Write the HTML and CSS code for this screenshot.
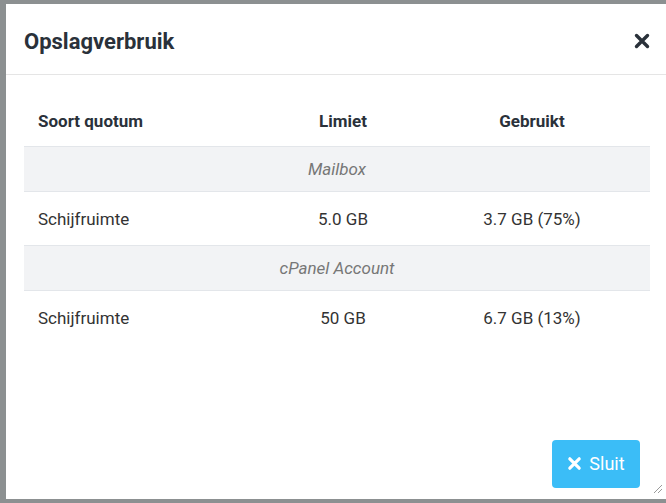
FILE: index.html
```html
<!DOCTYPE html>
<html lang="nl">
<head>
<meta charset="utf-8">
<title>Opslagverbruik</title>
<link rel="stylesheet" href="styles.css">
</head>
<body>
<div class="modal">
  <div class="modal-header">
    <h2 class="modal-title">Opslagverbruik</h2>
    <button class="close" aria-label="Sluiten">
      <svg width="16" height="16" viewBox="0 0 16 16"><path d="M2.5 2.5 L13.5 13.5 M13.5 2.5 L2.5 13.5" stroke="#2a313a" stroke-width="3.4" stroke-linecap="round"/></svg>
    </button>
  </div>
  <div class="modal-body">
    <table class="quota">
      <colgroup><col class="c1"><col class="c2"><col class="c3"></colgroup>
      <thead>
        <tr><th class="left">Soort quotum</th><th>Limiet</th><th>Gebruikt</th></tr>
      </thead>
      <tbody>
        <tr class="group"><td colspan="3">Mailbox</td></tr>
        <tr class="data"><td class="left">Schijfruimte</td><td>5.0 GB</td><td>3.7 GB (75%)</td></tr>
        <tr class="group"><td colspan="3">cPanel Account</td></tr>
        <tr class="data last"><td class="left">Schijfruimte</td><td>50 GB</td><td>6.7 GB (13%)</td></tr>
      </tbody>
    </table>
  </div>
  <div class="modal-footer">
    <button class="btn">
      <svg width="15" height="15" viewBox="0 0 16 16"><path d="M3 3 L13 13 M13 3 L3 13" stroke="#fff" stroke-width="3.4" stroke-linecap="round"/></svg>
      <span>Sluit</span>
    </button>
  </div>
  <div class="grip"></div>
</div>
</body>
</html>
```
FILE: styles.css
```css
html, body {
  margin: 0;
  padding: 0;
  height: 100%;
}
body {
  background: #8c9091;
  font-family: Roboto, "Liberation Sans", Arial, sans-serif;
  color: #333;
  overflow: hidden;
}
.modal {
  position: absolute;
  left: 6px;
  top: 4px;
  width: 660px;
  height: 495px;
  background: #fff;
  display: flex;
  flex-direction: column;
  box-sizing: border-box;
}
.modal-header {
  height: 71px;
  box-sizing: border-box;
  border-bottom: 1px solid #e5e5e5;
  display: flex;
  align-items: center;
  justify-content: space-between;
  padding: 4px 16px 0 18px;
}
.modal-title {
  margin: 0;
  font-size: 22px;
  font-weight: 700;
  color: #2a313a;
}
.close {
  border: 0;
  background: none;
  padding: 0;
  width: 16px;
  height: 16px;
  display: flex;
}
.modal-body {
  flex: 1;
  padding: 20px 16px 0 18px;
}
.quota {
  width: 626px;
  border-collapse: collapse;
  font-size: 17px;
}
.c1 { width: 248px; }
.c2 { width: 142px; }
.c3 { width: 236px; }
.quota th, .quota td {
  text-align: center;
  padding: 0 14px;
}
.quota .left {
  text-align: left;
}
.quota th {
  height: 51px;
  font-weight: 700;
  color: #2a313a;
  border-bottom: 1px solid #e3e6ea;
}
.group td {
  height: 44px;
  background: #f2f3f5;
  font-style: italic;
  color: #777;
  border-bottom: 1px solid #e3e6ea;
}
.data td {
  height: 53px;
  color: #333;
  border-bottom: 1px solid #e3e6ea;
}
.data.last td {
  border-bottom: 0;
}
.modal-footer {
  display: flex;
  justify-content: flex-end;
  padding: 0 26px 11px 0;
}
.btn {
  width: 88px;
  height: 48px;
  border: 0;
  border-radius: 4px;
  background: #3bbdf7;
  color: #fff;
  font-family: Roboto, "Liberation Sans", Arial, sans-serif;
  font-size: 18px;
  display: flex;
  align-items: center;
  justify-content: center;
  gap: 7px;
  padding: 0 0 2px 0;
}
.grip {
  position: absolute;
  right: 4px;
  bottom: 6px;
  width: 10px;
  height: 10px;
  background: repeating-linear-gradient(135deg, transparent 0 2px, #9a9a9a 2px 3px);
  clip-path: polygon(100% 0, 100% 100%, 0 100%);
}
```
